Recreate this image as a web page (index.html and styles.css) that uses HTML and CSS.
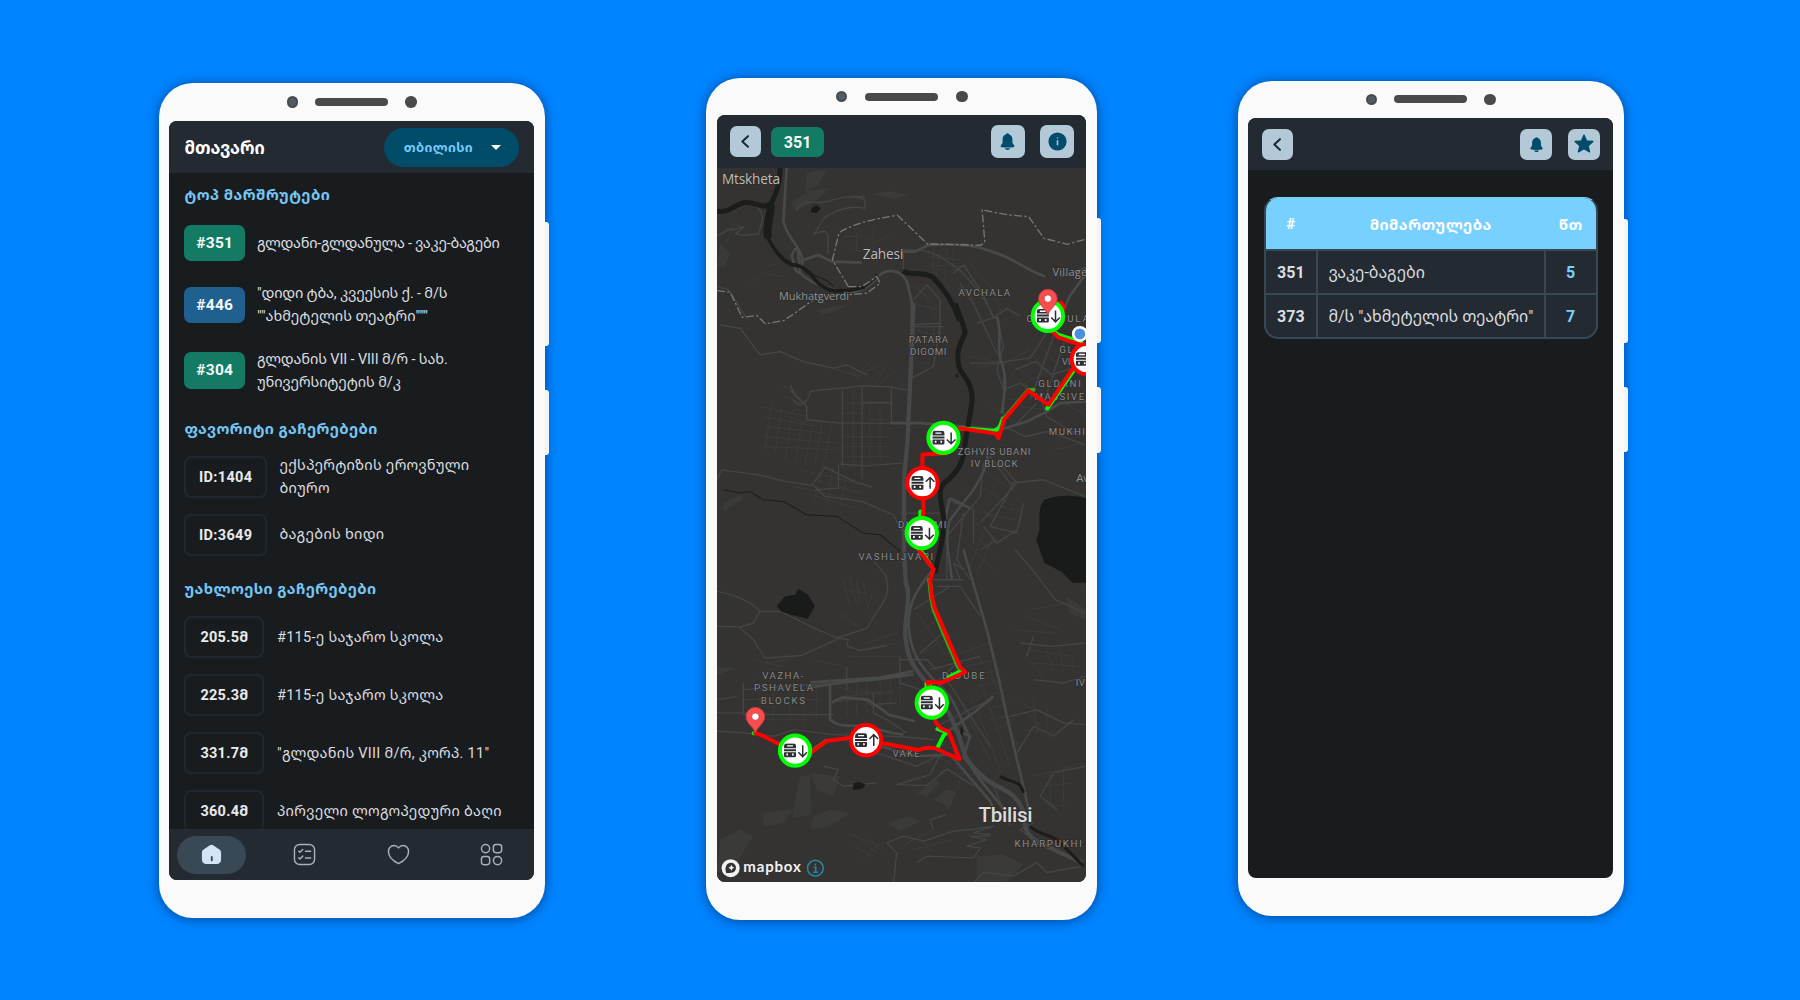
FILE: index.html
```html
<!DOCTYPE html>
<html lang="ka">
<head>
<meta charset="utf-8">
<title>ტრანსპორტი</title>
<link rel="stylesheet" href="styles.css">
</head>
<body>
<svg class="defs" width="0" height="0">
  <defs>
    <symbol id="bell" viewBox="0 0 24 24"><path d="M12 1.600c.9 0 1.600.5 1.800 1.300 2.700 .9 4.400 3.200 4.400 6.300v4.300l2.300 3.600c.5.900 0 2-1 2.100-4.900.6-10.100.6-15 0-1-.1-1.500-1.200-1-2.100l2.300-3.600V9.200c0-3.100 1.700-5.400 4.400-6.300.2-.8.9-1.300 1.800-1.300z"/><path d="M8.600 20.500h6.800c-.5 1.300-1.800 2.200-3.400 2.200s-2.900-.9-3.400-2.200z"/></symbol>
    <symbol id="back" viewBox="0 0 24 24"><path d="M15.500 4.500 7.500 12l8 7.500" fill="none" stroke="#1f2b33" stroke-width="2.900" stroke-linecap="round" stroke-linejoin="round"/></symbol>
    <symbol id="bus" viewBox="-34 -22 72 44">
      <path fill="#2b2f33" d="M-27-21h24q6 0 6 8v6h-36v-6q0-8 6-8zM-33-4h36v6h-36zM-33 5h36v11q0 4-4 4h-28q-4 0-4-4z"/>
      <path fill="#fff" d="M-24-16h18v4h-18zM-26 9h5v6h-5zM-9 9h5v6h-5z"/>
    </symbol>
    <g id="stop-down"><circle r="45.500" class="ring ring-go"/><use href="#bus" x="-34" y="-22" width="72" height="44"/><path class="arrow" d="M23-16V17M10 5 23 18 36 5"/></g>
    <g id="stop-up"><circle r="45.500" class="ring ring-back"/><use href="#bus" x="-34" y="-22" width="72" height="44"/><path class="arrow" d="M23 17V-16M10-4 23-17 36-4"/></g>
    <g id="pin"><path d="M0 0C-5-18-28-28-28-49a28 28 0 0 1 56 0C28-28 5-18 0 0z" fill="#f84d4d" stroke="#c8363a" stroke-width="2.500"/><circle cy="-49" r="11" fill="#fff" stroke="#c8363a" stroke-width="2"/></g>
  </defs>
</svg>

<main class="stage">
  <section class="phone phone-home">
    <div class="speaker"><i class="cam lens"></i><i class="slot"></i><i class="cam"></i></div>
    <span class="key key-long"></span><span class="key key-short"></span>
    <div class="screen">
      <header class="bar">
        <h1 class="page-title">მთავარი</h1>
        <div class="city"><span>თბილისი</span><i class="caret"></i></div>
      </header>
      <div class="feed">
        <h2 class="heading h-top">ტოპ მარშრუტები</h2>
        <div class="row route r1"><b class="tag green">#351</b><p class="t-a">გლდანი-გლდანულა - ვაკე-ბაგები</p></div>
        <div class="row route r2"><b class="tag blue">#446</b><p class="t-b">"დიდი ტბა, კვეესის ქ. - მ/ს<br><span class="t-b2">""ახმეტელის თეატრი"""</span></p></div>
        <div class="row route r3"><b class="tag green">#304</b><p class="t-c">გლდანის VII - VIII მ/რ - სახ.<br>უნივერსიტეტის მ/კ</p></div>
        <h2 class="heading h-fav">ფავორიტი გაჩერებები</h2>
        <div class="row stop"><b class="box id">ID:1404</b><p>ექსპერტიზის ეროვნული<br>ბიურო</p></div>
        <div class="row stop"><b class="box id">ID:3649</b><p>ბაგების ხიდი</p></div>
        <h2 class="heading h-near">უახლოესი გაჩერებები</h2>
        <div class="row stop"><b class="box">205.5მ</b><p>#115-ე საჯარო სკოლა</p></div>
        <div class="row stop"><b class="box">225.3მ</b><p>#115-ე საჯარო სკოლა</p></div>
        <div class="row stop"><b class="box">331.7მ</b><p>"გლდანის VIII მ/რ, კორპ. 11"</p></div>
        <div class="row stop"><b class="box">360.4მ</b><p>პირველი ლოგოპედური ბაღი</p></div>
      </div>
      <nav class="tabs">
        <span class="tab active"><svg viewBox="0 0 24 24"><path fill="#d3e5f5" d="M10.300 2.300a3 3 0 0 1 3.400 0l6.600 4.600a3.600 3.600 0 0 1 1.700 3.100v7.500a4.500 4.500 0 0 1-4.500 4.500h-11A4.500 4.500 0 0 1 2 17.500V10a3.600 3.600 0 0 1 1.700-3.100z"/><path class="door" d="M12.300 14.500v3.500"/></svg></span>
        <span class="tab"><svg viewBox="0 0 24 24"><rect x="1.500" y="1.500" width="21" height="21" rx="5.500"/><path d="m6 8.500 1.200 1.200 3-3M13 8.700h5.500M6 15.500l1.200 1.200 3-3M13 15.700h5.500"/></svg></span>
        <span class="tab"><svg viewBox="0 0 24 24"><path d="M12 21.500C7 19 1.500 14.500 1.500 8.800A5.900 5.900 0 0 1 7.300 2.700c2 0 3.600 1 4.700 2.400 1.100-1.400 2.700-2.400 4.700-2.400a5.900 5.900 0 0 1 5.800 6.100C22.500 14.500 17 19 12 21.500z"/></svg></span>
        <span class="tab"><svg viewBox="0 0 24 24"><circle cx="5.800" cy="5.800" r="4.300"/><rect x="14" y="1.500" width="8.600" height="8.600" rx="2.700"/><rect x="1.500" y="14" width="8.600" height="8.600" rx="2.700"/><circle cx="18.300" cy="18.300" r="4.300"/></svg></span>
      </nav>
    </div>
  </section>

  <section class="phone phone-map">
    <div class="speaker"><i class="cam lens"></i><i class="slot"></i><i class="cam"></i></div>
    <span class="key key-long"></span><span class="key key-short"></span>
    <div class="screen">
      <header class="bar">
        <span class="btn"><svg viewBox="0 0 24 24"><use href="#back"/></svg></span>
        <b class="line-no">351</b>
        <span class="btn wide push"><svg viewBox="0 0 24 24"><use href="#bell"/></svg></span>
        <span class="btn wide"><svg viewBox="0 0 24 24"><circle cx="12" cy="12" r="11.500"/><path d="M12 10.500v6.200M12 6.800v1.400" stroke="#b4c9d8" stroke-width="2"/></svg></span>
      </header>
      <svg class="map" viewBox="51 294 1107 2145" preserveAspectRatio="none">
        <g class="park">
          <path d="M320 310l30-10 30 5-25 40-40 20zM270 400l60-40 60-5-50 45-50 20zM510 372l60-8 55 10-40 14zM350 722l50-14 40-2-40 20-30 6zM60 520l30 30-15 40-24 0z"/>
          <path d="M70 1300l50-25 10 10-60 40zM51 1790l60 5-60 20zM300 2120l30-5 5 120-60 10zM330 2110l90 10-20 60-50-20zM60 2310l60-30 40 20-50 80-59 30zM190 2230l90-10-30 40-60 10zM340 2240l50-20 60 10-60 40-60 10zM560 2260l70-20 30 15-60 30zM700 2190l40-30 30 5-20 50zM830 2360l80-5 60 30-50 50-90 0zM1100 1580l57 40v30l-50-20zM650 2170l60-40 10 10-40 40z"/>
        </g>
        <g class="lanes">
          <path d="M430 500h60l30 20 60-30M430 525l50 20 90-5M520 470v70M470 490v50M700 540v60l60 60M720 540l-10 80M740 535l-5 90M760 535v70M680 560l100 10M690 585l110 5M620 640l50 30 40 80M650 650l60 60M640 700l80 20M800 570l70 80 40 90M830 620l-40 40 60 100M150 640l40-30 60 10M60 500l40-40 40 20M80 520l20-60M100 430l50-40M200 590l40-10"/>
          <path d="M250 980l60 20-50 40 60 20M240 940l80 60M180 1010l140 30M190 1040l160 30M200 1070l180 20M190 1100l220 20M190 1130l220 10M215 1000l-20 140M245 1010l-20 140M275 1040l-20 130M305 1060l-20 120M335 1070l-20 120M365 1060l-20 120M395 1060l-20 110"/>
          <path d="M300 1200l130 30 80 20M340 1230l140 40M280 1250l180 40M320 1270l160 50M370 1180l-30 120M400 1190l-20 120M440 1210l-20 100M430 1100h140M430 1130h130M440 1160h130M460 960v220M510 1000v180M540 1000v180M430 1000h150M430 1030h60M500 1050h70"/>
          <path d="M380 890l90 30 60-30M450 900l30 30M480 890l40 40M500 880l50 40M560 880l-40 70M590 900l-60 50M640 760h80M650 780l70 20M640 850l60-10M650 880h40M680 770v60M700 760v70M600 930l20 40M810 860l100 20 80-40M820 890l110-10M870 1010l100 60M930 910l80 60M950 890l70 60M990 850l80 80M1020 830l70 70M930 990l120-20M940 960l110-60M960 1010l80 10M1090 1000l60 30M1070 950l80 50M1060 1140l90-20M860 1210l90 60M840 1250l100 60M820 1290l60 60M780 1330l60 40M850 1330l90 20M870 1300l100 30M830 1400l60 60M810 1430l80 80M850 1390l-40 100M880 1400l-50 110"/>
          <path d="M430 1530l20 80M450 1525l20 80M470 1530l10 70M490 1540l10 60M430 1560l70 10M520 1560l-20 60M420 1630l50 40M500 1720l90-30M480 1740l110-20M450 1760l140 0M340 1770l90 20M160 1770l80 20M200 1780l60-10M170 1810l80-20M130 1890h240M130 1950h200M180 1860v100M220 1860v100M270 1850v110M310 1850v110M350 1840v110M410 1850l60 20 110-5M420 1880l160-10M440 1840v100M470 1840v100M500 1840v90M540 1830v90M570 1830v90M600 1830v80M400 1990h120M440 1960v60"/>
          <path d="M650 1630l90 130M680 1610l80 100M720 1640l-60 50M750 1700l-70 40M800 1720l50 60M780 1750l90-30M800 1790l90-20M820 1820l80-20M830 1850l80-20M850 1880l70-20M860 1920l70-20M870 1950l60-10M880 1980l60-20M840 1830l90 260M870 1800l90 250M810 1870l90 230M790 1920l80 150M700 2000l110 80M720 1980l90 90M680 2040l120 70M740 2010l-60 80M770 2040l-50 70M800 2080l-30 80M930 2080l-60 60M950 2120l-60 50M990 1740l120 20M1000 1780l140 10M970 1760l60 60M1040 1740l20 70M1080 1740l10 70M1120 1750v60M960 1900l130 60M980 1930l60 60M970 1980l90 10M1000 1890l10 100M1040 1900v90M1000 2120l120-30M1020 2150l100-10M1010 2200l90 10M1050 2090v120M1090 2090v110M980 1640l100 40M990 1620l110-20M940 1680l120 10M1100 1500l50 60"/>
          <path d="M470 2300l60 50M490 2290l60 60M460 2330l60 30M480 2380l60-60M440 2290l100 40M620 2320l80-40M640 2340l120-30M660 2310l40 40M600 2340l40-30"/>
        </g>
        <g class="roads minor">
          <path d="M290 425c10-45 60-20 90-30 50-16 90-20 115-5v25c-40-10-85 5-110 20-30 20-30 45-44 58 25-10 40-18 43 10v48M51 495c20 0 30-25 45-15l35-10-25 22 28 4 42-4c6-30 22-50 0-75-15-15-20-20-50-22M460 380h35M51 650l35 10 50 80"/>
          <path d="M640 540h-30v80M620 542c70-12 120 30 160 60 40 40 80 90 100 140l40-25 40 22M760 610l30-25 60 90 30 70M780 640l40 60 70 150M640 690l40-45 40 45v120M640 770h90"/>
          <path d="M60 765l60 10 60 80 60-10 70 30 90 20 40-10 60 30M280 990c15 30 45 10 50-25 50-10 80-5 150-17l90 3 50 10M290 985l-20-40M270 960l50 50v40l100 10M486 948v280M427 960v232M486 998h88M574 950v110M416 1182l78 6 110-8M415 1185v70l-70 5M65 1200l110 15 80 20 80 12 40-55 80 40 60 20M65 1200l-14 30M340 1245l35 35 110 15 95 40 25 50M600 1330h130M420 1060h180"/>
          <path d="M635 765l85-5-20 130-65 35M810 880h70l110-15 90-140M890 740l20 90-20 70 20 60 50-20 60 40 20 60 100 60M830 760l60-20M945 900l60-25 50 40 90-30M910 1060v-180M915 1070l60 30 70-15 110 40M950 1060l60-60M1060 800l-70 190M1090 820l-60 180M870 1160l60 80 100-10 125 50M850 1180l-10 100-100 120M900 1180l50 60-110 120M940 1240l-70 130 80 20 20-90M850 1370l40 50 60-40M740 1290l80 30v100M790 1330l-20 140 40 60"/>
          <path d="M51 1565c50 10 100 30 130 60h60l90 45 80 35 90-30 30-50c30-40 40-60 25-110l-35-40M180 1625l-20 35-40 12-69-2M120 1675l40 35 35 55 50-3 60-5 110-50M410 1705l35 5-5 18 40 15 80-15M130 1840v95h90M51 1930h80l100 5h170M51 1890l60-10M130 1860l200-15 80-5 190-20M440 1790v70M51 1985l80 5 90 10 60-20 120 15 180 5 120 10"/>
          <path d="M600 1770h80l30 30M410 1895l80-10 20 20 80-5M520 1870v60l40 20 60 40M600 1760v80l60 20M530 2050l120 40 70-35-30 60-100 30 90 3 60-50 80 50M370 2090l45 10-15 30 30 20 100-10M820 2110l60 40 50 120M930 2130l50 40M710 1550h70l60 90M700 1530h90M740 1440v90M780 1530l-20-50 30 20M640 1620l110-70M660 1750l80-70M690 1800l150-40M740 1830l130 200M850 1900l-140 70M770 1780l-70 70M960 1720l90 10 105-10M1000 1700l-20 60M930 1940l80-20 80 40 65 5M950 2050l50-80 60 30 60-50M1000 1830l90 10 65-20M1020 2180l40-70 95-20M1020 2180l50 40M945 1440l60 70 60 80 90 40M840 1440l50-30"/>
          <path d="M560 2320l50-20 60 15 90-30 50-5 70-10-60 20 50 5M560 2320l30 30-10 90M650 2380l30-20 140 5 20-30-40-5 60-20-50-10h60M700 2280l-10-30 50-15M820 2439l30-30 90 10 70-40 30 30 110-20M1000 2260l-40 20 40 30"/>
        </g>
        <g class="roads">
          <path d="M260 294l-10 160c10 40 25 50 40 75 25 40 20 60 5 80-15-10-10-30-20-50 10-30 20-30 20 0l5 50c40 40 100 50 130 55 60 10 80-20 110-50 20-15 60-20 80 20l15 60v100M295 575l60-20 40 20 90 3M610 545h35l40-20c90-5 140 0 190 20 70 20 90 50 160 75M1158 610l-50 70-25 60M1080 620l78-25M570 1060h90l140 10 100 10 80-25 60-30 40-25 78-5"/>
          <path d="M890 740c20 60-5 100 15 140 20 60 5 100 0 150M860 1130c10 50-10 80-40 130l-70 90c-20 60 0 120 5 180"/>
          <path class="major" d="M640 700l-8 200-10 220-10 100v220l5 100c20 40-10 120 0 170 10 90 50 100 80 160 40 30 60 80 80 130 20 60 10 60 60 110 60 60 100 40 130 110 10 50 0 70 50 100l130 60"/>
          <path d="M750 1285c-20 60-20 140-35 190-40 60-90 100-90 190 5 80 30 120 90 180 50 40 60 90 90 150M790 1440l70 240c20 80 40 160 60 260l40 170 30 130M390 1840v110c30 25 50 15 100 20 50 5 60 20 120 25M395 1900c40-30 60-10 110-10 20 20 40 25 60 45l80 20M320 1855l120-18 90-8 110-15M330 1838l210-14 100-20M750 1980l70-50 60-50M750 1285l60 30M760 1980l50 20-20 60 50 70 80 100M540 2030l110 30 100-5 60 70 60 70 20 50"/>
        </g>
        <g class="water-line">
          <path class="river" d="M51 424c40 4 50-18 80-26 40-4 50 20 80 5M240 294c0 50-10 70-28 110"/>
          <path class="river wide-river" d="M212 404c0 35-15 60-8 100"/>
          <path class="river thin-river" d="M204 504c20 40 40 65 70 80 30 0 40 15 60 30 30 50 70 60 160 38"/>
          <path class="river" d="M608 604c30 15 60 0 90 18 30 30 60 70 80 130M765 700c10 30 25 60 30 90-20 40-30 70-15 110 20 30 40 50 35 100-5 40-15 80-20 120-5 60-20 80-50 110-40 20-20 70-15 110 5 60-15 110-25 170"/>
          <path d="M495 652l40-32-10-10M320 600c20 25 60 20 80 50M70 1260l50 10 30-5 40 25 60 5 70 40 90 5 80 50 50 5 60 50" stroke-width="3"/>
          <path d="M900 2120c30 20 60 10 70 50M990 2270c30 30 60 20 90 50l70 70" stroke-width="9"/>
        </g>
        <g class="lake">
          <path d="M230 1610l25-30 30-5 10-18 30 20 20 32-22 38-50-12-28-8zM335 413l15-8 12 10-12 15-18-4zM765 920l6-10 6 12zM460 2142l15-5 22 8-10 12-28 4z"/>
          <path d="M1158 1285c-40-10-90-10-125 5-20 20-15 60-15 90l-10 30 25 70 50 25 35 35 40-2zM782 1970l6 10v20l-8-10z"/>
        </g>
        <path class="border" d="M445 650l-48-80 20-82c50-30 100-40 175-52l90 86 160 4 12-10-8-96 80 15 60 5 45 65 70 18 55-15M445 650l40 0 45-30 10 20-40 30-60 5M51 662l40 5 35 75 45-5 25 25 55-10 30-20 70-50"/>

        <g class="labels lit">
          <text x="66" y="341" font-size="41" textLength="174">Mtskheta</text>
          <text x="488" y="566" font-size="41" textLength="122">Zahesi</text>
        </g>
        <g class="labels">
          <text x="237" y="690" font-size="33" textLength="210">Mukhatgverdi</text>
          <text x="1057" y="617" font-size="33" textLength="104">Village</text>
          <text x="1128" y="1238" font-size="34">Av</text>
        </g>
        <g class="labels caps">
          <text x="775" y="677" textLength="158">AVCHALA</text>
          <text x="979" y="755" textLength="190">GLDANULA</text>
          <text x="626" y="820" textLength="121">PATARA</text><text x="630" y="856" textLength="112">DIGOMI</text>
          <text x="1077" y="849" textLength="132">GLDANI</text><text x="1085" y="885" textLength="110">VILLAGE</text>
          <text x="1014" y="951" textLength="131">GLDANI</text><text x="1003" y="989" textLength="152">MASSIVE</text>
          <text x="1046" y="1096" textLength="172">MUKHIANI</text>
          <text x="772" y="1156" textLength="222">ZGHVIS UBANI</text><text x="812" y="1193" textLength="143">IV BLOCK</text>
          <text x="594" y="1376" textLength="148">DIGHOMI</text><text x="475" y="1472" textLength="227">VASHLIJVARI</text>
          <text x="726" y="1827" textLength="131">DIDUBE</text>
          <text x="187" y="1827" textLength="126">VAZHA-</text><text x="162" y="1865" textLength="180">PSHAVELA</text><text x="182" y="1903" textLength="136">BLOCKS</text>
          <text x="1127" y="1848" class="tight">IV</text>
          <text x="577" y="2062" textLength="85">VAKE</text><text x="943" y="2333" textLength="205">KHARPUKHI</text>
        </g>
        <text class="city-name" x="835" y="2257" textLength="162">Tbilisi</text>

        <g class="line go">
          <path d="M1041 1016l77-111M780 1075l100 8q15-4 20-15l8-22M1055 780l18 14 70 22M661 1325l-1 40M660 1440l30 45M688 1530l4 25M745 1823l38-20M690 1842l-11 2v14M712 2034l18-36 10-10-28-10M165 1990l-4 1"/>
        </g>
        <path class="line go under" d="M1000 960l-17 2-74 88M688 1530q3 55 13 91l40 95 34 78M335 2045l44-31"/>
        <g class="line ret">
          <path d="M1080 698q14 8 8 24M1055 783l18 19 66 22 20 44-44 32-70 105-60-42-73 87-17 55-8-14-108-16M740 1150l-73 4v86l3 80-6 70-9 50 45 58-10 34q5 60 15 85l40 95 35 80 15 15-70 32-42-2 12 58 10 57q8 25 40 33l33 84-73-33q-25-5-50 5l-110-21-47-10-53-5-65 9-45 33-50-6-55-21-40-21-25-9"/>
        </g>
        <use href="#stop-down" x="1043" y="738"/><use href="#pin" x="1043" y="735"/>
        <circle cx="1139" cy="792" r="20" fill="#4a90e2" stroke="#fff" stroke-width="8"/>
        <use href="#stop-up" x="1160" y="868"/><use href="#stop-down" x="730" y="1104"/><use href="#stop-up" x="667" y="1240"/>
        <use href="#stop-down" x="665" y="1390"/><use href="#stop-down" x="695" y="1899"/><use href="#stop-up" x="498" y="2012"/><use href="#stop-down" x="285" y="2043"/>
        <use href="#pin" x="166" y="1990"/>
        <g class="credit">
          <circle cx="92" cy="2396" r="27"/><path d="M79 2411c-6-14-1-31 14-31a15 15 0 0 1 0 30c-6 1-10 1-14 1z"/><path d="m94 2386 3 6 6 3-6 3-3 6-3-6-6-3 6-3z"/>
          <text x="130" y="2407" font-size="45" textLength="172">mapbox</text>
        </g>
        <g class="about"><circle cx="346" cy="2396" r="23.500"/><path d="M341 2393h6v15M339 2408h15M346 2383v5"/></g>
      </svg>
    </div>
  </section>

  <section class="phone phone-board">
    <div class="speaker"><i class="cam lens"></i><i class="slot"></i><i class="cam"></i></div>
    <span class="key key-long"></span><span class="key key-short"></span>
    <div class="screen">
      <header class="bar">
        <span class="btn"><svg viewBox="0 0 24 24"><use href="#back"/></svg></span>
        <span class="btn wide push"><svg viewBox="0 0 24 24"><use href="#bell"/></svg></span>
        <span class="btn wide"><svg class="star" viewBox="0 0 24 24"><path d="M12 1.300l3.100 7 7.600.700-5.700 5 1.700 7.500-6.700-3.900-6.700 3.900L7 14 1.300 9l7.600-.7z" stroke="#004c6a" stroke-width="1.600" stroke-linejoin="round"/></svg></span>
      </header>
      <div class="board">
        <div class="cell head">#</div><div class="cell head">მიმართულება</div><div class="cell head">წთ</div>
        <div class="cell num">351</div><div class="cell dir">ვაკე-ბაგები</div><div class="cell min">5</div>
        <div class="cell num">373</div><div class="cell dir">მ/ს "ახმეტელის თეატრი"</div><div class="cell min">7</div>
      </div>
    </div>
  </section>
</main>
</body>
</html>
```
FILE: styles.css
```css
* { box-sizing: border-box; }
body {
  margin: 0;
  width: 1800px;
  height: 1000px;
  overflow: hidden;
  background: #0084ff;
  font-family: Roboto, "Noto Sans Georgian", "DejaVu Sans Condensed", "DejaVu Sans", sans-serif;
  color: #dcdee0;
}
h1, h2, p { margin: 0; }
.defs { display: block; }
.stage { display: flex; align-items: flex-start; padding-left: 158.700px; }

/* device frame */
.phone {
  position: relative;
  flex: none;
  width: 386.600px;
  height: 835px;
  padding: 0 11px 0 10.800px;
  border-radius: 34px;
  background: #fafafa;
  box-shadow: 0 1px 12px rgba(0, 20, 60, .55);
}
.phone-home { margin-top: 83.300px; }
.phone-map { margin: 77.700px 0 0 161px; width: 391px; height: 842.600px; }
.phone-board { margin: 80.500px 0 0 140.300px; }
.speaker { display: flex; align-items: center; justify-content: center; gap: 17px; height: 37.800px; }
.phone-map .speaker { gap: 18px; }
.cam { width: 11.500px; height: 11.500px; border-radius: 50%; background: #4a4a4a; }
.lens { background: #4e5d68; border: 2px solid #4a4a4a; }
.slot { width: 73px; height: 8px; border-radius: 4px; background: #4a4a4a; }
.key { position: absolute; left: 100%; width: 3.500px; border-radius: 0 3px 3px 0; background: #f4f4f4; }
.key-long { top: 138.500px; height: 124px; }
.key-short { top: 306.500px; height: 65px; }
.phone-map .key-long { top: 140px; height: 125.500px; }
.phone-map .key-short { top: 309.500px; height: 65.500px; }
.screen { display: flex; flex-direction: column; height: 759.400px; border-radius: 8px; background: #191c1e; overflow: hidden; }
.phone-map .screen { height: 767px; }
.bar { flex: none; display: flex; align-items: center; height: 52px; background: #232a31; }
.phone-map .bar { height: 52.500px; }

/* home */
.phone-home .bar { padding: 0 15px; justify-content: space-between; }
.page-title { font-size: 17px; font-weight: 700; color: #fff; }
.city { display: flex; align-items: center; justify-content: space-between; width: 135px; height: 39px; padding: 0 18px 0 19.500px; border-radius: 20px; background: #004c69; color: #76cbfa; font-size: 13px; font-weight: 700; letter-spacing: .35px; }
.caret { border: 5px solid transparent; border-top: 5.500px solid #fff; border-bottom: 0; }
.feed { flex: 1; min-height: 0; overflow: hidden; padding: 9px 15px 0; }
.heading { height: 26px; line-height: 26px; font-size: 15px; font-weight: 700; letter-spacing: .47px; color: #76c6f5; white-space: nowrap; }
.row { display: flex; align-items: center; white-space: nowrap; font-size: 14.500px; line-height: 23px; }
.route { gap: 12px; }
.r1 { height: 70px; }
.r2 { height: 54px; }
.r3 { height: 77px; }
.t-a { letter-spacing: -.28px; }
.t-b { letter-spacing: -.17px; }
.t-b2 { letter-spacing: 0; }
.t-c { letter-spacing: -.12px; }
.tag { width: 60.600px; height: 36.500px; line-height: 37px; border-radius: 7px; text-align: center; color: #f4f8f8; font-size: 15.500px; letter-spacing: .3px; }
.green { background: #137b64; }
.blue { background: #1f6090; }
.h-fav { margin: 6.500px 0 6px; }
.stop { gap: 12.500px; height: 58px; letter-spacing: .28px; }
.box { width: 80px; height: 42px; border: 2px solid #20282f; border-radius: 7px; line-height: 39px; text-align: center; font-size: 14.500px; color: #e8eaec; }
.box.id { width: 82.500px; letter-spacing: .35px; }
.h-near { margin: 12.500px 0 6px; }
.tabs { flex: none; display: flex; align-items: center; justify-content: space-between; height: 51px; padding: 0 8px 0 7.500px; background: #232a31; }
.tab { display: grid; place-items: center; width: 69px; height: 38px; border-radius: 19px; }
.tab.active { background: #384955; }
.tab svg { width: 23px; height: 23px; fill: none; stroke: #a9b0b7; stroke-width: 1.500; stroke-linecap: round; stroke-linejoin: round; }
.tab.active svg { stroke: none; }
.tab .door { stroke: #384955; stroke-width: 2; }

/* toolbar buttons */
.btn { display: grid; place-items: center; width: 30.500px; height: 30.500px; border-radius: 7px; background: #b4c9d8; }
.btn svg { width: 17px; height: 17px; fill: #004c6a; }
.btn.wide { width: 34px; height: 33px; }
.btn.wide svg { width: 19px; height: 19px; }
.push { margin-left: auto; }
.phone-map .bar { padding: 0 12px 0 13px; }
.line-no { margin-left: 10.500px; width: 53px; height: 30px; line-height: 31px; border-radius: 7px; background: #137b64; color: #f4f8f8; text-align: center; font-size: 16px; }
.phone-map .push, .phone-board .push { margin-right: 15.500px; }
.phone-board .bar { padding: 0 13.500px 0 14px; }
.phone-board .btn.wide { width: 32px; height: 31px; }
.phone-board .btn.wide svg { width: 17px; height: 17px; }
.phone-board .btn.wide .star { width: 20px; height: 20px; }

/* route map */
.map { display: block; flex: 1; min-height: 0; width: 100%; background: #343332; }
.map path, .arrow { fill: none; }
.map .park path { fill: #3a3a37; }
.lanes { stroke: #3d3d3c; stroke-width: 2.500; }
.roads { stroke: #484949; stroke-width: 8; stroke-linejoin: round; }
.roads.minor { stroke: #444545; stroke-width: 4; }
.roads .major { stroke: #474849; stroke-width: 13; }
.water-line { stroke: #1b1d1b; stroke-width: 5; stroke-linejoin: round; }
.river { stroke-width: 15; }
.wide-river { stroke-width: 24; }
.thin-river { stroke-width: 11; }
.map .lake path { fill: #191b1a; }
.border { stroke: #777; stroke-width: 4; stroke-dasharray: 24 7 7 7; }
.labels { fill: #939393; font-family: "Open Sans", sans-serif; stroke: #2c2c2b; stroke-width: 4; paint-order: stroke; }
.labels.lit { fill: #bdbdbd; }
.caps { font-family: Roboto, sans-serif; font-size: 29px; letter-spacing: 3px; fill: #8a8a8a; }
.caps .tight { letter-spacing: 1px; }
.city-name { fill: #dcdcdc; font: 500 62px Roboto, sans-serif; stroke: #2c2c2b; stroke-width: 4; paint-order: stroke; }
.line { stroke-width: 12; stroke-linecap: round; stroke-linejoin: round; }
.go { stroke: #0f0; }
.under { stroke: #2fae12; }
.ret { stroke: #f00; }
.ring { fill: #fff; stroke-width: 12; }
.ring-go { stroke: #0f0; }
.ring-back { stroke: #f00; }
.arrow { stroke: #2b2f33; stroke-width: 4.500; }
.credit { fill: #f2f2f2; font-family: Lato, sans-serif; font-weight: 700; }
.map .credit path { fill: #343332; }
.map .credit path + path { fill: #f2f2f2; }
.about { fill: none; stroke: #2387a8; stroke-width: 4.500; }

/* arrivals board */
.board { display: grid; grid-template: 51.500px 44px 44px / 50px 1fr 50px; margin: 26.500px 15.500px 0 15.500px; border: 2px solid #374853; border-top: 1px solid #78d0ff; border-radius: 14px; overflow: hidden; background: #232a31; }
.cell { display: flex; align-items: center; justify-content: center; white-space: nowrap; border: 0 solid #374853; border-top-width: 2px; font-size: 16px; }
.head { margin: 0 -2px; border: 0; background: #78d0ff; color: #fff; font-weight: 700; font-size: 15px; letter-spacing: .5px; }
.num { font-weight: 700; }
.dir { justify-content: flex-start; padding-left: 10.500px; border-left-width: 2px; border-right-width: 2px; letter-spacing: -.03px; }
.min { color: #78d0ff; font-weight: 700; }
```
